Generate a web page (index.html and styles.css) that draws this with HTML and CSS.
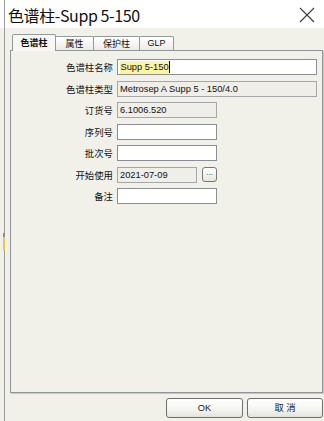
FILE: index.html
```html
<!DOCTYPE html>
<html lang="zh-CN">
<head>
<meta charset="utf-8">
<title>色谱柱-Supp 5-150</title>
<link rel="stylesheet" href="styles.css">
</head>
<body>
<div class="window">
  <div class="titlebar">
    <span class="title">色谱柱-Supp 5-150</span>
    <svg class="close" width="16" height="16" viewBox="0 0 16 16"><path d="M1 1 L15 15 M15 1 L1 15" stroke="#3a3a3a" stroke-width="1.1" fill="none"/></svg>
  </div>
  <div class="content">
    <div class="tabs">
      <div class="tab active">色谱柱</div>
      <div class="tab t2">属性</div>
      <div class="tab t3">保护柱</div>
      <div class="tab t4">GLP</div>
    </div>
    <div class="panel">
      <div class="form">
        <div class="label">色谱柱名称</div>
        <div class="field wide"><span class="sel">Supp 5-150</span><span class="caret"></span></div>
        <div class="label">色谱柱类型</div>
        <div class="field wide ro">Metrosep A Supp 5 - 150/4.0</div>
        <div class="label">订货号</div>
        <div class="field short ro">6.1006.520</div>
        <div class="label">序列号</div>
        <div class="field short"></div>
        <div class="label">批次号</div>
        <div class="field short"></div>
        <div class="label">开始使用</div>
        <div class="daterow"><div class="field date ro">2021-07-09</div><div class="dots">...</div></div>
        <div class="label">备注</div>
        <div class="field short"></div>
      </div>
    </div>
    <div class="footer">
      <div class="btn ok">OK</div>
      <div class="btn">取 消</div>
    </div>
  </div>
  <span class="mark"></span>
</div>
</body>
</html>
```
FILE: styles.css
```css
html, body {
  margin: 0;
  padding: 0;
}
body {
  width: 324px;
  height: 421px;
  overflow: hidden;
  background: linear-gradient(#ffffff 0, #ffffff 28px, #f1f1ea 28px);
  font-family: "Liberation Sans", "Noto Sans CJK SC", sans-serif;
  color: #1a1a1a;
}
.window {
  position: relative;
  margin-left: 4px;
  border-left: 1px solid #9c9c9c;
  height: 421px;
  display: flex;
  flex-direction: column;
}
.titlebar {
  height: 28px;
  background: #ffffff;
  display: flex;
  align-items: center;
  justify-content: space-between;
  padding: 0 9px 0 3px;
}
.title {
  font-family: "Noto Sans CJK SC", sans-serif;
  font-size: 16px;
  color: #111;
  line-height: 28px;
  letter-spacing: -0.4px;
  margin-top: 1px;
}
.close {
  display: block;
  margin-top: 2px;
}
.content {
  flex: 1;
  display: flex;
  flex-direction: column;
  padding: 6px 1px 0 5px;
}
.tabs {
  display: flex;
  height: 16px;
  padding-left: 2px;
  align-items: flex-end;
}
.tab {
  box-sizing: border-box;
  height: 14px;
  border: 1px solid #919b9c;
  border-bottom: none;
  border-radius: 2px 2px 0 0;
  background: linear-gradient(#ffffff, #ecebe5);
  font-family: "Noto Sans CJK SC", sans-serif;
  font-size: 9px;
  line-height: 13px;
  text-align: center;
  color: #111;
  margin-left: -1px;
}
.tab.active {
  height: 17px;
  width: 44px;
  margin-left: 0;
  background: #f7f7f3;
  font-weight: bold;
  line-height: 16px;
  position: relative;
  z-index: 1;
  margin-bottom: -1px;
}
.tab.t2 { width: 39px; }
.tab.t3 { width: 47px; }
.tab.t4 { width: 35px; font-family: "Liberation Sans", sans-serif; }
.panel {
  box-sizing: border-box;
  height: 343px;
  border: 1px solid #8f979a;
  box-shadow: 1px 1px 0 #c8c8c0;
  background: #f1f1ea;
  padding-top: 8px;
}
.form {
  display: grid;
  grid-template-columns: 102px auto;
  column-gap: 4px;
  row-gap: 5.5px;
  align-items: center;
}
.label {
  text-align: right;
  font-family: "Noto Sans CJK SC", sans-serif;
  font-size: 9.4px;
  color: #111;
  line-height: 16px;
}
.field {
  box-sizing: border-box;
  height: 16px;
  border: 1px solid #8b8f91;
  background: #ffffff;
  font-family: "Liberation Sans", sans-serif;
  font-size: 9.3px;
  line-height: 14px;
  padding-left: 2px;
  white-space: nowrap;
  overflow: hidden;
  display: flex;
  align-items: center;
  color: #111;
}
.field.ro {
  background: #efeee8;
  border-color: #a4a7a8;
}
.field.wide { width: 200px; }
.field.short { width: 100px; }
.field.date { width: 80px; }
.sel {
  background: #fbf3a6;
  padding: 0 0.5px;
  line-height: 13px;
}
.caret {
  width: 1px;
  height: 12px;
  background: #000;
}
.daterow {
  display: flex;
  align-items: center;
  gap: 5px;
}
.dots {
  box-sizing: border-box;
  width: 15px;
  height: 15px;
  border: 1px solid #777;
  border-radius: 3px;
  background: linear-gradient(#ffffff, #e6e5de);
  font-size: 8px;
  line-height: 9px;
  text-align: center;
  color: #333;
}
.footer {
  display: flex;
  justify-content: flex-end;
  gap: 4px;
  padding-top: 5px;
}
.btn {
  box-sizing: border-box;
  width: 76px;
  height: 20px;
  border: 1px solid #6f6f6f;
  border-radius: 3px;
  background: linear-gradient(#ffffff 0%, #f4f4ef 60%, #e4e3dc 100%);
  font-family: "Liberation Sans", "Noto Sans CJK SC", sans-serif;
  font-size: 9.3px;
  line-height: 18px;
  text-align: center;
  color: #222;
}
.btn.ok { width: 77px; }
.mark {
  position: absolute;
  left: -2px;
  top: 233px;
  width: 2px;
  height: 18px;
  background: linear-gradient(#8a8a8a 0, #8a8a8a 4px, #e8c94a 4px);
}
```
